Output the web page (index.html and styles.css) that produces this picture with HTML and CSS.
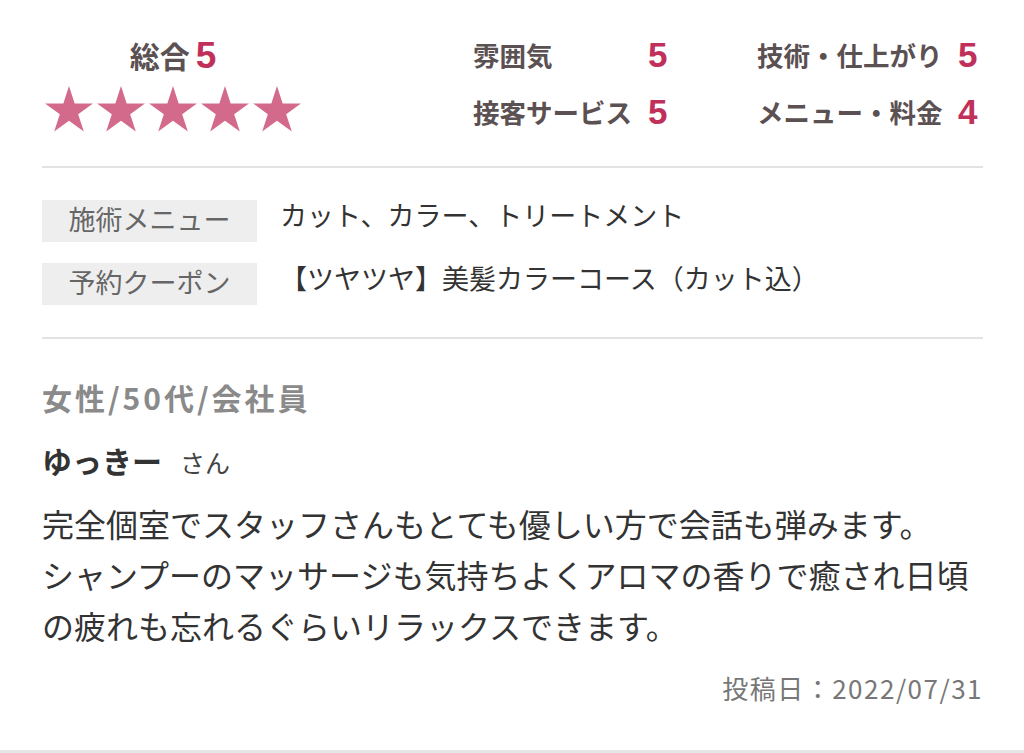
FILE: index.html
```html
<!DOCTYPE html>
<html lang="ja">
<head>
<meta charset="utf-8">
<title>口コミ</title>
<link rel="stylesheet" href="styles.css">
</head>
<body>
<div class="review">
  <section class="ratings">
    <div class="overall">
      <div class="overall-title">総合<span class="num">5</span></div>
      <div class="stars">
        <svg class="star" viewBox="-47.55 -50 95.1 90.45"><polygon points="0,-50 11.23,-15.45 47.55,-15.45 18.17,5.9 29.39,40.45 0,19.1 -29.39,40.45 -18.17,5.9 -47.55,-15.45 -11.23,-15.45"/></svg>
        <svg class="star" viewBox="-47.55 -50 95.1 90.45"><polygon points="0,-50 11.23,-15.45 47.55,-15.45 18.17,5.9 29.39,40.45 0,19.1 -29.39,40.45 -18.17,5.9 -47.55,-15.45 -11.23,-15.45"/></svg>
        <svg class="star" viewBox="-47.55 -50 95.1 90.45"><polygon points="0,-50 11.23,-15.45 47.55,-15.45 18.17,5.9 29.39,40.45 0,19.1 -29.39,40.45 -18.17,5.9 -47.55,-15.45 -11.23,-15.45"/></svg>
        <svg class="star" viewBox="-47.55 -50 95.1 90.45"><polygon points="0,-50 11.23,-15.45 47.55,-15.45 18.17,5.9 29.39,40.45 0,19.1 -29.39,40.45 -18.17,5.9 -47.55,-15.45 -11.23,-15.45"/></svg>
        <svg class="star" viewBox="-47.55 -50 95.1 90.45"><polygon points="0,-50 11.23,-15.45 47.55,-15.45 18.17,5.9 29.39,40.45 0,19.1 -29.39,40.45 -18.17,5.9 -47.55,-15.45 -11.23,-15.45"/></svg>
      </div>
    </div>
    <div class="detail-grid">
      <div class="d-label">雰囲気</div><div class="d-num">5</div>
      <div class="d-label">技術・仕上がり</div><div class="d-num">5</div>
      <div class="d-label">接客サービス</div><div class="d-num">5</div>
      <div class="d-label">メニュー・料金</div><div class="d-num">4</div>
    </div>
  </section>
  <hr class="divider">
  <section class="menu-info">
    <div class="info-row">
      <div class="info-label">施術メニュー</div>
      <div class="info-value">カット、カラー、トリートメント</div>
    </div>
    <div class="info-row">
      <div class="info-label">予約クーポン</div>
      <div class="info-value">【ツヤツヤ】美髪カラーコース（カット込）</div>
    </div>
  </section>
  <hr class="divider">
  <section class="comment">
    <div class="meta">女性/50代/会社員</div>
    <div class="name">ゆっきー<span class="san">さん</span></div>
    <p class="body">完全個室でスタッフさんもとても優しい方で会話も弾みます。<br>シャンプーのマッサージも気持ちよくアロマの香りで癒され日頃の疲れも忘れるぐらいリラックスできます。</p>
    <div class="date">投稿日：2022/07/31</div>
  </section>
</div>
<div class="bottom-line"></div>
</body>
</html>
```

FILE: styles.css
```css
html, body {
  margin: 0;
  padding: 0;
  background: #ffffff;
}
body {
  font-family: "Liberation Sans", "Noto Sans CJK JP", sans-serif;
  color: #333333;
}
.review {
  padding: 0 41px 0 42px;
}
.ratings {
  display: flex;
  justify-content: space-between;
  padding: 26px 0 26px 0;
}
.overall {
  width: 262px;
  padding-top: 10px;
  display: flex;
  flex-direction: column;
  align-items: center;
}
.overall-title {
  font-size: 30px;
  line-height: 40px;
  font-weight: bold;
  color: #5b5052;
}
.overall-title .num {
  font-size: 37px;
  font-weight: bold;
  color: #c0305a;
  margin-left: 6px;
}
.stars {
  display: flex;
  gap: 4px;
  margin-top: 8px;
}
.star {
  width: 48px;
  height: 45.6px;
  fill: #d46a8b;
  display: block;
}
.detail-grid {
  display: grid;
  grid-template-columns: 175px 109px 201px 25px;
  grid-auto-rows: 57px;
  align-items: center;
}
.d-label {
  font-size: 26.5px;
  font-weight: bold;
  color: #5b5052;
  white-space: nowrap;
}
.d-num {
  font-size: 35px;
  font-weight: bold;
  color: #c0305a;
}
.divider {
  border: 0;
  height: 2px;
  background: #e3e3e3;
  margin: 0;
}
.menu-info {
  padding: 32px 0;
  display: flex;
  flex-direction: column;
  gap: 21px;
}
.info-row {
  display: flex;
  align-items: flex-start;
  height: 42px;
}
.info-label {
  width: 215px;
  height: 42px;
  line-height: 42px;
  background: #eeeeee;
  color: #666666;
  font-size: 27px;
  text-align: center;
}
.info-value {
  margin-left: 23px;
  line-height: 34px;
  font-size: 27px;
  color: #333333;
}
.comment {
  padding: 38px 0 45px 0;
}
.meta {
  font-family: "Noto Sans CJK JP", sans-serif;
  font-size: 30px;
  line-height: 40px;
  letter-spacing: 3px;
  font-weight: bold;
  color: #8a8a8a;
}
.name {
  margin-top: 26px;
  font-size: 30px;
  line-height: 40px;
  font-weight: bold;
  color: #333333;
}
.san {
  font-size: 25px;
  font-weight: normal;
  color: #444444;
  margin-left: 18px;
}
.body {
  margin: 17px 0 0 0;
  font-size: 32px;
  line-height: 51px;
  color: #333333;
}
.date {
  margin-top: 17px;
  text-align: right;
  font-family: "Noto Sans CJK JP", sans-serif;
  font-size: 26px;
  letter-spacing: 1.5px;
  line-height: 34px;
  color: #777777;
}
.bottom-line {
  height: 3px;
  background: #e6e6e6;
}
```
